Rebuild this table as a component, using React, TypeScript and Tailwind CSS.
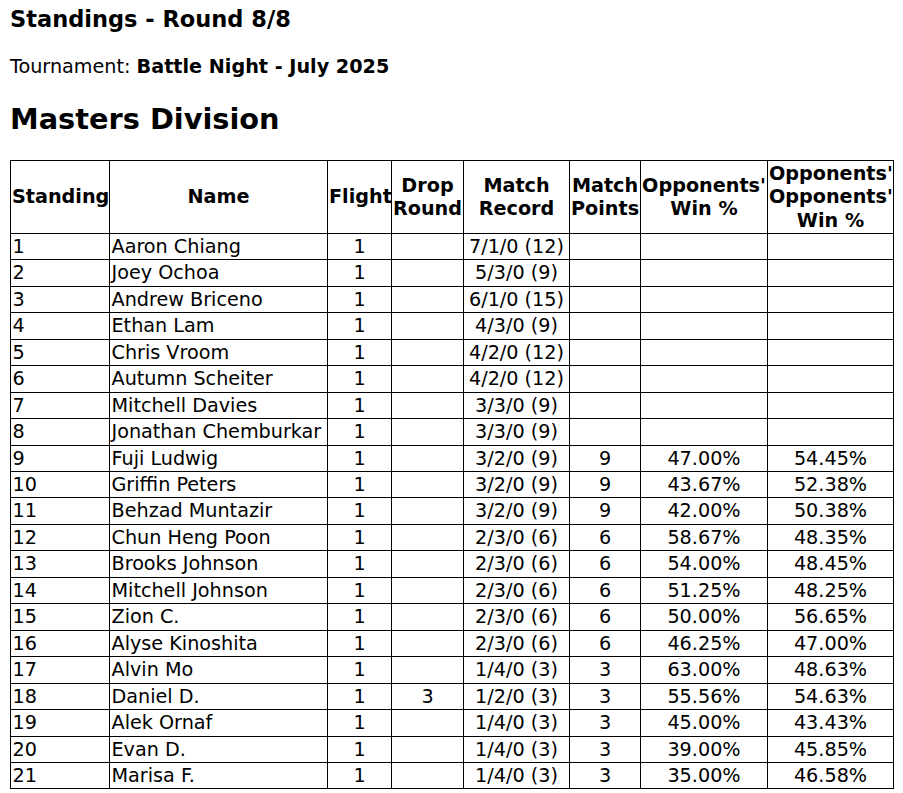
const rows: [string, string, string, string, string, string, string, string][] = [
  ['1', 'Aaron Chiang', '1', '', '7/1/0 (12)', '', '', ''],
  ['2', 'Joey Ochoa', '1', '', '5/3/0 (9)', '', '', ''],
  ['3', 'Andrew Briceno', '1', '', '6/1/0 (15)', '', '', ''],
  ['4', 'Ethan Lam', '1', '', '4/3/0 (9)', '', '', ''],
  ['5', 'Chris Vroom', '1', '', '4/2/0 (12)', '', '', ''],
  ['6', 'Autumn Scheiter', '1', '', '4/2/0 (12)', '', '', ''],
  ['7', 'Mitchell Davies', '1', '', '3/3/0 (9)', '', '', ''],
  ['8', 'Jonathan Chemburkar', '1', '', '3/3/0 (9)', '', '', ''],
  ['9', 'Fuji Ludwig', '1', '', '3/2/0 (9)', '9', '47.00%', '54.45%'],
  ['10', 'Griffin Peters', '1', '', '3/2/0 (9)', '9', '43.67%', '52.38%'],
  ['11', 'Behzad Muntazir', '1', '', '3/2/0 (9)', '9', '42.00%', '50.38%'],
  ['12', 'Chun Heng Poon', '1', '', '2/3/0 (6)', '6', '58.67%', '48.35%'],
  ['13', 'Brooks Johnson', '1', '', '2/3/0 (6)', '6', '54.00%', '48.45%'],
  ['14', 'Mitchell Johnson', '1', '', '2/3/0 (6)', '6', '51.25%', '48.25%'],
  ['15', 'Zion C.', '1', '', '2/3/0 (6)', '6', '50.00%', '56.65%'],
  ['16', 'Alyse Kinoshita', '1', '', '2/3/0 (6)', '6', '46.25%', '47.00%'],
  ['17', 'Alvin Mo', '1', '', '1/4/0 (3)', '3', '63.00%', '48.63%'],
  ['18', 'Daniel D.', '1', '3', '1/2/0 (3)', '3', '55.56%', '54.63%'],
  ['19', 'Alek Ornaf', '1', '', '1/4/0 (3)', '3', '45.00%', '43.43%'],
  ['20', 'Evan D.', '1', '', '1/4/0 (3)', '3', '39.00%', '45.85%'],
  ['21', 'Marisa F.', '1', '', '1/4/0 (3)', '3', '35.00%', '46.58%'],
]

export default function App() {
  const th = 'border border-black px-px py-px font-bold text-center align-middle leading-[23.33px]'
  const td = 'border border-black px-[1.5px] py-px leading-[23.45px] whitespace-nowrap'

  return (
    <div className="bg-white text-black px-[10px] pt-[5.5px] pb-[6px] font-['DejaVu_Sans',Verdana,sans-serif] text-[19.2px]">
      <div className="font-bold text-[22.5px] leading-[26.2px]">Standings - Round 8/8</div>

      <p className="mt-[24.5px] leading-[22.35px]">
        Tournament: <b>Battle Night - July 2025</b>
      </p>

      <h2 className="mt-[24.7px] font-bold text-[28.8px] leading-[33.5px]">Masters Division</h2>

      <table className="mt-[23.2px] w-full table-fixed border-collapse border border-black">
        <colgroup>
          <col className="w-[99px]" />
          <col className="w-[218px]" />
          <col className="w-[64px]" />
          <col className="w-[72px]" />
          <col className="w-[106px]" />
          <col className="w-[71px]" />
          <col className="w-[127px]" />
          <col className="w-[126px]" />
        </colgroup>
        <thead>
          <tr>
            <th className={th}>Standing</th>
            <th className={th}>Name</th>
            <th className={th}>Flight</th>
            <th className={th}>Drop Round</th>
            <th className={th}>Match Record</th>
            <th className={th}>Match Points</th>
            <th className={th}>Opponents' Win %</th>
            <th className={th}>Opponents' Opponents' Win %</th>
          </tr>
        </thead>
        <tbody>
          {rows.map((r) => (
            <tr key={r[0]}>
              <td className={td}>{r[0]}</td>
              <td className={td}>{r[1]}</td>
              <td className={`${td} text-center`}>{r[2]}</td>
              <td className={`${td} text-center`}>{r[3]}</td>
              <td className={`${td} text-center`}>{r[4]}</td>
              <td className={`${td} text-center`}>{r[5]}</td>
              <td className={`${td} text-center`}>{r[6]}</td>
              <td className={`${td} text-center`}>{r[7]}</td>
            </tr>
          ))}
        </tbody>
      </table>
    </div>
  )
}
